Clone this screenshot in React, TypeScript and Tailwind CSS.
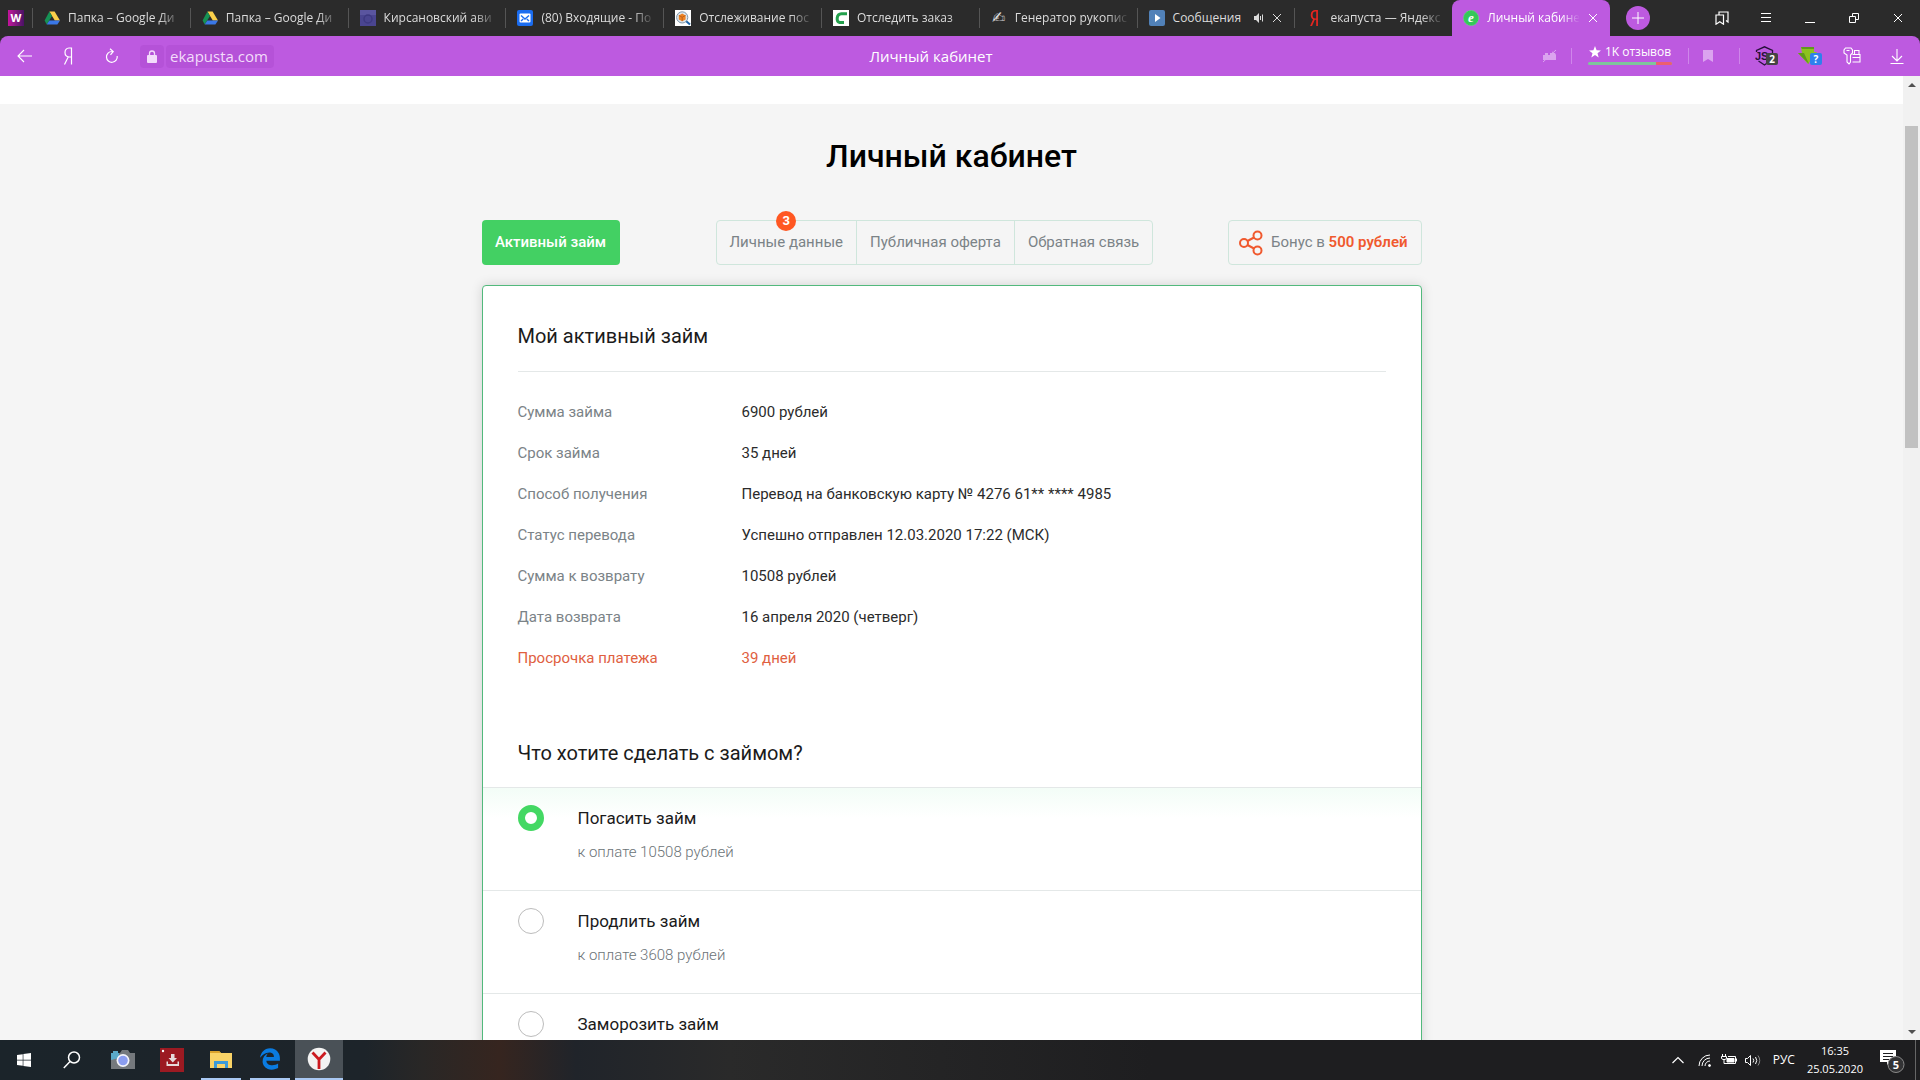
import { useState, type ReactNode } from 'react';
import { FaEdgeLegacy, FaWindows, FaYandex } from 'react-icons/fa6';

type Tab = { title: string; icon: ReactNode; sound?: boolean };

const DriveIcon = () => (
  <svg viewBox="0 0 16 16" className="size-4 shrink-0">
    <path d="M5.4 1.5h5.2L16 10.6h-5.2z" fill="#fbd04a" />
    <path d="M5.4 1.5 8 6 2.7 14.6 0.6 10.4z" fill="#169154" />
    <path d="M5.3 10.4H16l-2.6 4.2H2.7z" fill="#3a78e8" />
  </svg>
);

const PurpleSquareIcon = () => (
  <svg viewBox="0 0 16 16" className="size-4 shrink-0">
    <rect width="16" height="16" fill="#4a4590" />
    <rect width="16" height="5" fill="#5a559f" />
    <circle cx="8" cy="9" r="4" fill="none" stroke="#3d3980" strokeWidth="1.5" />
  </svg>
);

const MailIcon = () => (
  <svg viewBox="0 0 16 16" className="size-4 shrink-0">
    <rect width="16" height="16" rx="2" fill="#1a6cf0" />
    <rect x="2.5" y="3.5" width="11" height="9" rx="1" fill="#fff" />
    <path d="m4 5.5 4 3.5 4-3.5M4 11l2.2-2M12 11 9.8 9" fill="none" stroke="#1a6cf0" strokeWidth="1.4" />
  </svg>
);

const ParcelIcon = () => (
  <svg viewBox="0 0 16 16" className="size-4 shrink-0">
    <rect width="16" height="16" fill="#fff" />
    <path d="m11 11 4 3.4" stroke="#1c63a8" strokeWidth="2" />
    <circle cx="7.2" cy="7.4" r="5.6" fill="#dfe8ef" stroke="#7f96a8" />
    <path d="m7.2 3.6 3.4 1.8v4L7.2 11.3 3.8 9.4v-4z" fill="#ee8426" />
    <path d="m3.8 5.4 3.4 1.8 3.4-1.8M7.2 7.2v4" fill="none" stroke="#b85a12" strokeWidth="0.8" />
  </svg>
);

const GreenCurveIcon = () => (
  <svg viewBox="0 0 16 16" className="size-4 shrink-0">
    <rect width="16" height="16" fill="#fff" />
    <path d="M14 3.8H8.5Q4.6 4 4.2 8t2.4 4.4H11" fill="none" stroke="#23a04c" strokeWidth="3" />
  </svg>
);

const PlayIcon = () => (
  <svg viewBox="0 0 16 16" className="size-4 shrink-0">
    <rect width="16" height="16" rx="2" fill="#5181b8" />
    <path d="m6 4 5.5 4L6 12z" fill="#fff" />
  </svg>
);

const CloseIcon = () => (
  <svg viewBox="0 0 10 10" className="size-2.5 shrink-0" fill="none" stroke="currentColor">
    <path d="m1 1 8 8M9 1 1 9" />
  </svg>
);

const tabs: Tab[] = [
  { title: 'Папка – Google Ди', icon: <DriveIcon /> },
  { title: 'Папка – Google Ди', icon: <DriveIcon /> },
  { title: 'Кирсановский ави', icon: <PurpleSquareIcon /> },
  { title: '(80) Входящие - По', icon: <MailIcon /> },
  { title: 'Отслеживание пос', icon: <ParcelIcon /> },
  { title: 'Отследить заказ', icon: <GreenCurveIcon /> },
  { title: 'Генератор рукопис', icon: <span className="w-4 shrink-0 font-['DejaVu_Sans',sans-serif] text-base leading-4">✍</span> },
  { title: 'Сообщения', icon: <PlayIcon />, sound: true },
  { title: 'екапуста — Яндекс', icon: <FaYandex className="size-4 shrink-0 text-[#e52620]" /> },
];

const fade = 'min-w-0 flex-1 overflow-hidden text-left whitespace-nowrap [mask-image:linear-gradient(to_right,black_80%,transparent)]';

const TabStrip = () => (
  <div className="flex h-9 bg-[#2b2b2b] text-xs text-[#dcdcdc]">
    <button aria-label="W" className="my-2.5 mr-2 ml-2 size-4 shrink-0 bg-gradient-to-r from-[#c4129c] to-[#4b1065] font-[Inter] text-[11px] leading-4 font-bold text-white">
      W
    </button>
    <div className="grid min-w-0 flex-1 grid-cols-10">
      {tabs.map((tab, index) => (
        <button key={index} className="flex min-w-0 items-center">
          <span className="h-5 w-px bg-[#555]" />
          <span className="flex min-w-0 flex-1 items-center gap-2 pr-2 pl-[11px]">
            {tab.icon}
            <span className={tab.sound ? 'flex-1 text-left' : fade}>{tab.title}</span>
            {tab.sound && (
              <span className="flex items-center gap-2 pr-1">
                <svg viewBox="0 0 10 10" className="size-2.5" fill="currentColor">
                  <path d="M0 3h2l3-3v10L2 7H0z" />
                  <path d="M6.5 3v4M8.5 1.5v7" stroke="currentColor" />
                </svg>
                <CloseIcon />
              </span>
            )}
          </span>
        </button>
      ))}
      <button className="flex min-w-0 items-center gap-2 rounded-t-lg bg-[#bd5ae0] pr-3 pl-[11px] text-white">
        <svg viewBox="0 0 16 16" className="size-4 shrink-0">
          <circle cx="8" cy="8" r="7.5" fill="#35c759" stroke="#58dd79" strokeDasharray="2 1" />
          <text x="8" y="12" textAnchor="middle" fill="#fff" fontSize="13" fontWeight="700" fontStyle="italic" fontFamily="Liberation Serif, serif">
            e
          </text>
        </svg>
        <span className={fade}>Личный кабинет</span>
        <CloseIcon />
      </button>
    </div>
    <div className="flex w-[310px] shrink-0 items-center pl-4 text-white">
      <button aria-label="Новая вкладка" className="mr-auto flex size-6 items-center justify-center rounded-full bg-[#bd5ae0]">
        <svg viewBox="0 0 12 12" className="size-3" stroke="currentColor">
          <path d="M6 0v12M0 6h12" />
        </svg>
      </button>
      <button aria-label="Закладки" className="flex w-11 justify-center">
        <svg viewBox="0 0 14 14" className="size-3.5" fill="none" stroke="currentColor" strokeWidth="1.2">
          <path d="M1 4h7.500v9.200L4.800 10.800 1 13.200zM4 4V1h9v10l-2-1.500" />
        </svg>
      </button>
      <button aria-label="Меню" className="flex w-11 justify-center">
        <svg viewBox="0 0 10 10" className="size-2.5" stroke="currentColor">
          <path d="M0 .5h10M0 4.500h10M0 8.500h10" />
        </svg>
      </button>
      <button aria-label="Свернуть" className="flex w-11 justify-center">
        <svg viewBox="0 0 10 10" className="size-2.5" stroke="currentColor">
          <path d="M0 9.500h10" />
        </svg>
      </button>
      <button aria-label="Восстановить" className="flex w-11 justify-center">
        <svg viewBox="0 0 10 10" className="size-2.5" fill="none" stroke="currentColor">
          <path d="M.5 3.500h6v6h-6zM3.500 3.500v-3h6v6h-3" />
        </svg>
      </button>
      <button aria-label="Закрыть" className="flex w-11 justify-center">
        <CloseIcon />
      </button>
    </div>
  </div>
);

const AddressBar = () => (
  <div className="bg-[#2b2b2b]">
    <div className="flex h-10 items-center rounded-t-lg bg-[#bd5ae0] text-white">
      <div className="flex w-80 shrink-0 items-center pl-0.5">
        <button aria-label="Назад" className="flex w-11 justify-center">
          <svg viewBox="0 0 15 14" className="h-3.5 w-[15px]" fill="none" stroke="currentColor" strokeWidth="1.1">
            <path d="M15 7H1M7 1 1 7l6 6" />
          </svg>
        </button>
        <button aria-label="Яндекс" className="flex w-11 justify-center">
          <svg viewBox="0 0 10 18" className="h-[18px] w-2.5" fill="none" stroke="currentColor" strokeWidth="1.2">
            <path d="M8.500 17.500V1H6Q2 1.400 2 5.500T6 10h2.500M5.200 10 1.500 17.500" />
          </svg>
        </button>
        <button aria-label="Обновить" className="flex w-11 justify-center">
          <svg viewBox="0 0 14 16" className="h-4 w-3.5" fill="none" stroke="currentColor" strokeWidth="1.2">
            <path d="M7.800 3.500H7A5.400 5.400 0 1 0 12.200 8M5 .8l3.200 2.700L5.500 6.800" />
          </svg>
        </button>
        <button aria-label="Защищённое соединение" className="ml-1.5 flex h-[23px] w-6 items-center justify-center rounded bg-[#b552d8]">
          <svg viewBox="0 0 10 13" className="h-[13px] w-2.5" fill="#f3dcfb">
            <rect y="5" width="10" height="8" rx="1" />
            <path d="M2.500 6V3.500a2.500 2.500 0 0 1 5 0V6" fill="none" stroke="#f3dcfb" strokeWidth="1.3" />
          </svg>
        </button>
        <input
          aria-label="Адрес"
          defaultValue="ekapusta.com"
          className="ml-0.5 h-[23px] w-[108px] rounded bg-[#b552d8] px-1 text-[15px] leading-5 text-[#f3dcfb] outline-none"
        />
      </div>
      <div className="flex-1 text-center text-[15px]">Личный кабинет</div>
      <div className="flex w-[378px] shrink-0 items-center pr-4">
        <button aria-label="Турбо">
          <svg viewBox="0 0 15 14" className="h-3.5 w-[15px] text-[#dba3ef]" fill="currentColor">
            <path d="M1 6h2V4h3v2h2V4h2V2l1 2h2l1 2v5H1z" />
            <path d="m1 13 13-12" stroke="currentColor" />
          </svg>
        </button>
        <span className="ml-3.5 h-4 w-px bg-[#cf86ea]" />
        <button className="ml-4 flex w-[84px] flex-col items-stretch pb-1">
          <span className="flex items-center justify-center gap-1 text-xs leading-4 whitespace-nowrap">
            <svg viewBox="0 0 12 12" className="size-3" fill="currentColor">
              <path d="m6 0 1.600 4.200 4.400.2-3.500 2.800 1.200 4.400L6 9.100l-3.700 2.500 1.200-4.400L0 4.400l4.400-.2z" />
            </svg>
            1K отзывов
          </span>
          <span className="mt-0.5 flex h-[3px] overflow-hidden rounded-sm bg-[#7fc49b]">
            <span className="ml-auto w-4 bg-[#ec5f6e]" />
          </span>
        </button>
        <span className="ml-4 h-4 w-px bg-[#cf86ea]" />
        <button aria-label="В закладки" className="ml-3.5">
          <svg viewBox="0 0 10 12" className="h-3 w-2.5" fill="#dba3ef">
            <path d="M0 0h10v12L5 9l-5 3z" />
          </svg>
        </button>
        <span className="ml-[26px] h-4 w-px bg-[#cf86ea]" />
        <button aria-label="Расширение" className="ml-[15px]">
          <svg viewBox="0 0 23 20" className="h-5 w-[23px]">
            <path d="M1.500 6V4.500L9.500.8l8 3.700V13l-8 6-6-4" fill="none" stroke="#26103a" strokeWidth="1.300" />
            <text x="0" y="13.500" fill="#26103a" fontSize="11" fontWeight="700" fontFamily="Liberation Sans, sans-serif">
              JS
            </text>
            <rect x="11" y="7" width="12" height="12" rx="2" fill="#444" />
            <text x="17" y="16.500" textAnchor="middle" fill="#fff" fontSize="10" fontWeight="700">2</text>
          </svg>
        </button>
        <button aria-label="Загрузчик" className="ml-5">
          <svg viewBox="0 0 24 20" className="h-5 w-6">
            <path d="M3 1h13v5h3l-9 12L0 7h4z" fill="#8dc21f" />
            <path d="M3 1h13v2H4zM0 7h6l5 11z" fill="#5f9a1c" />
            <rect x="12" y="7" width="12" height="12" rx="2" fill="#2f80ed" />
            <text x="18" y="16.500" textAnchor="middle" fill="#fff" fontSize="10" fontWeight="700">?</text>
          </svg>
        </button>
        <button aria-label="Пароли" className="ml-[21px]">
          <svg viewBox="0 0 18 18" className="size-[18px]" fill="none" stroke="currentColor" strokeWidth="1.1">
            <path d="M2.500 1h5.500l1.500 2v3L7.500 8v7L6 17l-2-2V8L1 6V3zM3.500 3.500h3M9.500 7.500H17v7.500H9.500M9.500 10.500H17M11.500 7.500v-4H16v4" />
          </svg>
        </button>
        <button aria-label="Загрузки" className="ml-auto">
          <svg viewBox="0 0 14 15" className="h-[15px] w-3.5" fill="none" stroke="currentColor" strokeWidth="1.1">
            <path d="M7 0v11.500M2 7l5 5 5-5M.5 14.500h13" />
          </svg>
        </button>
      </div>
    </div>
  </div>
);

const details = [
  { label: 'Сумма займа', value: '6900 рублей' },
  { label: 'Срок займа', value: '35 дней' },
  { label: 'Способ получения', value: 'Перевод на банковскую карту № 4276 61** **** 4985' },
  { label: 'Статус перевода', value: 'Успешно отправлен 12.03.2020 17:22 (МСК)' },
  { label: 'Сумма к возврату', value: '10508 рублей' },
  { label: 'Дата возврата', value: '16 апреля 2020 (четверг)' },
  { label: 'Просрочка платежа', value: '39 дней', overdue: true },
];

const options = [
  { id: 'repay', title: 'Погасить займ', note: 'к оплате 10508 рублей' },
  { id: 'extend', title: 'Продлить займ', note: 'к оплате 3608 рублей' },
  { id: 'freeze', title: 'Заморозить займ', note: '' },
];

const AccountNav = () => (
  <nav className="flex h-[45px] text-[15px] whitespace-nowrap text-[#7b8387]">
    <a href="#loan" className="flex w-[138px] items-center justify-center rounded bg-[#43d063] font-medium text-white">
      Активный займ
    </a>
    <div className="ml-24 flex divide-x divide-[#cfe6dc] rounded border border-[#cfe6dc]">
      <a href="#data" className="relative flex items-center px-[13px]">
        Личные данные
        <span className="absolute -top-2.5 left-1/2 size-5 -translate-x-1/2 rounded-full bg-[#ff5722] text-center text-[13px] leading-5 font-bold text-white">
          3
        </span>
      </a>
      <a href="#offer" className="flex items-center px-[13px]">Публичная оферта</a>
      <a href="#feedback" className="flex items-center px-[13px]">Обратная связь</a>
    </div>
    <a href="#bonus" className="ml-auto flex items-center rounded border border-[#cfe6dc] pr-[13px] pl-2.5">
      <svg viewBox="0 0 24 26" className="mr-2 h-[26px] w-6" fill="none" stroke="#f0592e" strokeWidth="2">
        <circle cx="5" cy="13" r="4" />
        <circle cx="18.500" cy="5.500" r="4" />
        <circle cx="18.500" cy="20.500" r="4" />
        <path d="m8.500 11 6.500-3.500M8.500 15l6.500 3.500" />
      </svg>
      <span>
        Бонус в <b className="font-semibold text-[#f0592e]">500 рублей</b>
      </span>
    </a>
  </nav>
);

const LoanCard = () => {
  const [selected, setSelected] = useState('repay');

  return (
    <section className="mt-5 rounded border border-[#52b97c] bg-white shadow-[0_0_12px_rgba(0,0,0,0.15)]">
      <div className="px-[35px] pt-[35px]">
        <h2 className="border-b border-[#e4e8e8] pb-5 text-xl leading-[30px] text-[#1b1b1b]">Мой активный займ</h2>
        <dl className="pt-5 text-[15px] leading-[41px]">
          {details.map((row) => (
            <div key={row.label} className={row.overdue ? 'flex text-[#e0603f]' : 'flex text-[#2b2b2b]'}>
              <dt className={row.overdue ? 'w-56' : 'w-56 text-[#7b8387]'}>{row.label}</dt>
              <dd>{row.value}</dd>
            </div>
          ))}
        </dl>
      </div>
      <fieldset>
        <legend className="px-[35px] pt-[59px] pb-[19px] text-xl leading-[30px] text-[#1b1b1b]">Что хотите сделать с займом?</legend>
        {options.map((option) => (
          <label
            key={option.id}
            className={`flex h-[103px] items-start border-t border-[#e4e8e8] px-[35px] pt-[17px] ${
              selected === option.id ? 'bg-gradient-to-b from-[#f3fdf7] to-white to-30%' : ''
            }`}
          >
            <input
              type="radio"
              name="action"
              checked={selected === option.id}
              onChange={() => setSelected(option.id)}
              className="size-[26px] appearance-none rounded-full border border-[#bcbcbc] bg-white checked:border-[7px] checked:border-[#43d863]"
            />
            <span className="ml-[34px] text-[17px] leading-[26px] text-[#1b1b1b]">
              {option.title}
              <span className="mt-2 block text-[15px] leading-[26px] font-light text-[#6b7377]">{option.note}</span>
            </span>
          </label>
        ))}
      </fieldset>
    </section>
  );
};

const Scrollbar = () => (
  <div className="flex w-[17px] shrink-0 flex-col items-center bg-[#f1f1f1]">
    <button aria-label="Вверх" className="flex h-[17px] items-center">
      <svg viewBox="0 0 8 4" className="h-1 w-2" fill="#505050">
        <path d="m0 4 4-4 4 4z" />
      </svg>
    </button>
    <span className="mt-[33px] h-[322px] w-[13px] bg-[#c1c1c1]" />
    <button aria-label="Вниз" className="mt-auto flex h-[17px] items-center">
      <svg viewBox="0 0 8 4" className="h-1 w-2" fill="#505050">
        <path d="m0 0 4 4 4-4z" />
      </svg>
    </button>
  </div>
);

const Taskbar = () => (
  <footer className="flex h-10 shrink-0 bg-[linear-gradient(to_right,#1b242a_0%,#1d242a_19%,#292726_22%,#36251f_26%,#20242a_30%,#2a2a2a_38%,#1e1e20_60%)] text-white">
    <button aria-label="Пуск" className="flex w-12 items-center justify-center">
      <FaWindows className="size-4" />
    </button>
    <button aria-label="Поиск" className="flex w-12 items-center justify-center">
      <svg viewBox="0 0 18 18" className="size-[18px]" fill="none" stroke="currentColor" strokeWidth="1.5">
        <circle cx="11" cy="6.500" r="5.500" />
        <path d="M7 10.500.8 17" />
      </svg>
    </button>
    <button aria-label="Камера" className="flex w-[54px] items-center justify-center">
      <svg viewBox="0 0 24 20" className="h-5 w-6">
        <path d="M0 3h2V1h5v2h2l2-3h6l2 3h5v16H0z" fill="#75797d" />
        <path d="M0 3h2V1h5v2h1v5L0 10z" fill="#5aa9c9" />
        <circle cx="12" cy="10.500" r="6.500" fill="#f4f4fb" />
        <circle cx="12" cy="10.500" r="4.800" fill="#8b9df0" />
      </svg>
    </button>
    <button aria-label="Загрузчик" className="flex w-11 items-center justify-center">
      <svg viewBox="0 0 24 24" className="size-6">
        <rect width="24" height="24" fill="#9c1a22" />
        <circle cx="3" cy="3" r="1.200" fill="#fff" />
        <path d="M11 6h3.500v4H17l-4.200 4.500L8.500 10H11zM6.500 13.500H8V16h9.500v-2.500H19V18H6.500z" fill="#e6dcdc" />
      </svg>
    </button>
    <button aria-label="Проводник" className="ml-[7px] flex w-10 items-center justify-center border-b-2 border-[#a9c8f3]">
      <svg viewBox="0 0 22 18" className="h-[18px] w-[22px]">
        <path d="M0 1h9l2 2h11v15H0z" fill="#f9d367" />
        <path d="M0 1h9l2 2H0z" fill="#dba32c" />
        <path d="M4 18v-7h14v7h-3v-4H7v4z" fill="#3c9bd9" />
      </svg>
    </button>
    <button aria-label="Edge" className="ml-[9px] flex w-10 items-center justify-center border-b-2 border-[#a9c8f3]">
      <FaEdgeLegacy className="size-[22px] text-[#0a7be0]" />
    </button>
    <button aria-label="Яндекс.Браузер" className="ml-[5px] flex w-12 items-center justify-center border-b-2 border-[#a9c8f3] bg-[#4a5157]">
      <svg viewBox="0 0 24 24" className="size-6">
        <circle cx="12" cy="12" r="11.300" fill="#f3f3f3" />
        <path d="m5.500 5.500 6.500 7 6.500-7M12 12v10" fill="none" stroke="#cc1a20" strokeWidth="2.800" />
      </svg>
    </button>
    <div className="ml-auto flex items-center">
      <button aria-label="Скрытые значки" className="mr-3.5">
        <svg viewBox="0 0 12 8" className="h-2 w-3" fill="none" stroke="currentColor" strokeWidth="1.2">
          <path d="M.5 7 6 1.500 11.500 7" />
        </svg>
      </button>
      <svg viewBox="0 0 13 13" className="mr-2.5 size-[13px]" fill="none" stroke="currentColor">
        <path d="M1 12A11 11 0 0 1 12 1M4 12a8 8 0 0 1 8-8M7 12a5 5 0 0 1 5-5" />
        <circle cx="11.500" cy="11.500" r="1" fill="currentColor" />
      </svg>
      <svg viewBox="0 0 16 12" className="mr-2 h-3 w-4" fill="none" stroke="currentColor">
        <path d="M1.500 0v2M4.500 0v2M.5 2.500h5v2l-1.500 1H2l-1.500-1zM3 5.500v4h11.500v-7H7M15.500 4.500v3" />
        <path d="M6 4.500h7v3.500H6z" fill="currentColor" />
      </svg>
      <svg viewBox="0 0 16 13" className="mr-3 h-[13px] w-4" fill="none" stroke="currentColor">
        <path d="M.5 4.500h2l3-3v10l-3-3h-2zM8 4.500q1.500 2 0 4M10.500 3q2.500 3.500 0 7" />
        <path d="M13 1.500q3.500 5 0 10" stroke="#888" />
      </svg>
      <span className="text-xs">РУС</span>
      <div className="ml-3 text-center text-[11px] leading-[18px]">
        <div>16:35</div>
        <div>25.05.2020</div>
      </div>
      <button aria-label="Уведомления" className="ml-4">
        <svg viewBox="0 0 26 26" className="size-[26px]">
          <path d="M1 3h16v12h-6l-3 3v-3H1z" fill="#fff" />
          <path d="M4 6.500h10M4 9.500h10M4 12.500h6" stroke="#1e1e20" />
          <circle cx="17" cy="17.500" r="8" fill="#333335" stroke="#8a8a8a" />
          <text x="17" y="21.500" textAnchor="middle" fill="#fff" fontSize="11" fontWeight="700">5</text>
        </svg>
      </button>
      <span className="ml-2.5 h-10 w-px bg-[#666]" />
      <span className="w-1" />
    </div>
  </footer>
);

const App = () => (
  <div className="flex h-screen flex-col overflow-hidden font-['Open_Sans','Noto_Sans',sans-serif]">
    <header className="shrink-0">
      <TabStrip />
      <AddressBar />
    </header>
    <div className="flex min-h-0 flex-1">
      <main className="flex-1 overflow-hidden bg-[#f5f5f5] font-[Roboto,sans-serif]">
        <div className="h-7 bg-white" />
        <div className="mx-auto max-w-[940px]">
          <h1 className="pt-8 text-center text-[32px] leading-10 font-medium text-black">Личный кабинет</h1>
          <div className="mt-11">
            <AccountNav />
          </div>
          <LoanCard />
        </div>
      </main>
      <Scrollbar />
    </div>
    <Taskbar />
  </div>
);

export default App;
